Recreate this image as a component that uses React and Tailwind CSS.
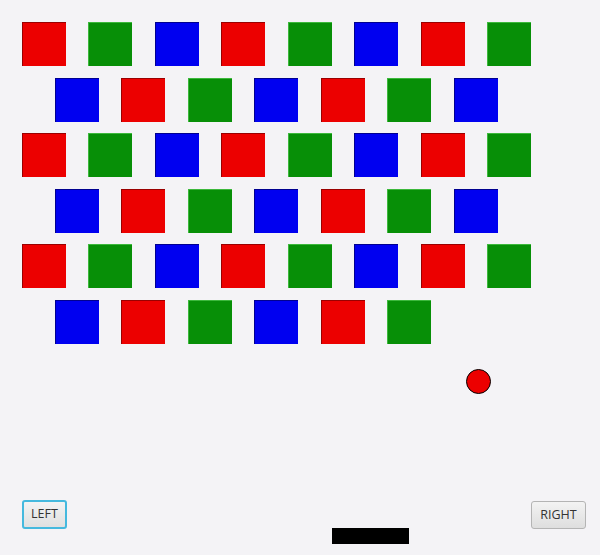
import React from "react";

const C = {
  R: "bg-[#ec0000] border-l border-t border-[#9a0000]",
  G: "bg-[#078f07] border-l border-t border-[#3cb83c]",
  B: "bg-[#0000f0] border-l border-t border-[#000090]",
};

const rows = [
  { off: false, cells: "RGBRGBRG" },
  { off: true, cells: "BRGBRGB" },
  { off: false, cells: "RGBRGBRG" },
  { off: true, cells: "BRGBRGB" },
  { off: false, cells: "RGBRGBRG" },
  { off: true, cells: "BRGBRG" },
];

export default function App() {
  return (
    <div className="relative w-[600px] h-[555px] bg-[#f4f3f6] overflow-hidden" style={{ fontFamily: '"Open Sans", "Noto Sans", sans-serif' }}>
      <div className="flex flex-col gap-y-[11.5px] pt-[22px]">
        {rows.map((r, i) => (
          <div key={i} className={`flex gap-x-[22.45px] ${r.off ? "pl-[55px]" : "pl-[22px]"}`}>
            {r.cells.split("").map((c, j) => (
              <div key={j} className={`w-[44px] h-[44px] shrink-0 ${C[c]}`} />
            ))}
          </div>
        ))}
      </div>
      <div className="absolute left-[466px] top-[369px] w-[25px] h-[25px] rounded-full bg-[#ec0000] border border-black" />
      <div className="absolute left-[332px] top-[528px] w-[77px] h-[16px] bg-black" />
      <button className="absolute left-[22px] top-[500px] w-[45px] h-[29px] rounded-[3px] border-2 border-[#45b9de] bg-gradient-to-b from-[#f3f3f3] to-[#e0e0e0] text-[12.5px] text-[#333] leading-none flex items-center justify-center">
        LEFT
      </button>
      <button className="absolute left-[531px] top-[501px] w-[55px] h-[28px] rounded-[3px] border border-[#b4b4b4] bg-gradient-to-b from-[#f3f3f3] to-[#dedede] text-[12.5px] text-[#333] leading-none flex items-center justify-center">
        RIGHT
      </button>
    </div>
  );
}
